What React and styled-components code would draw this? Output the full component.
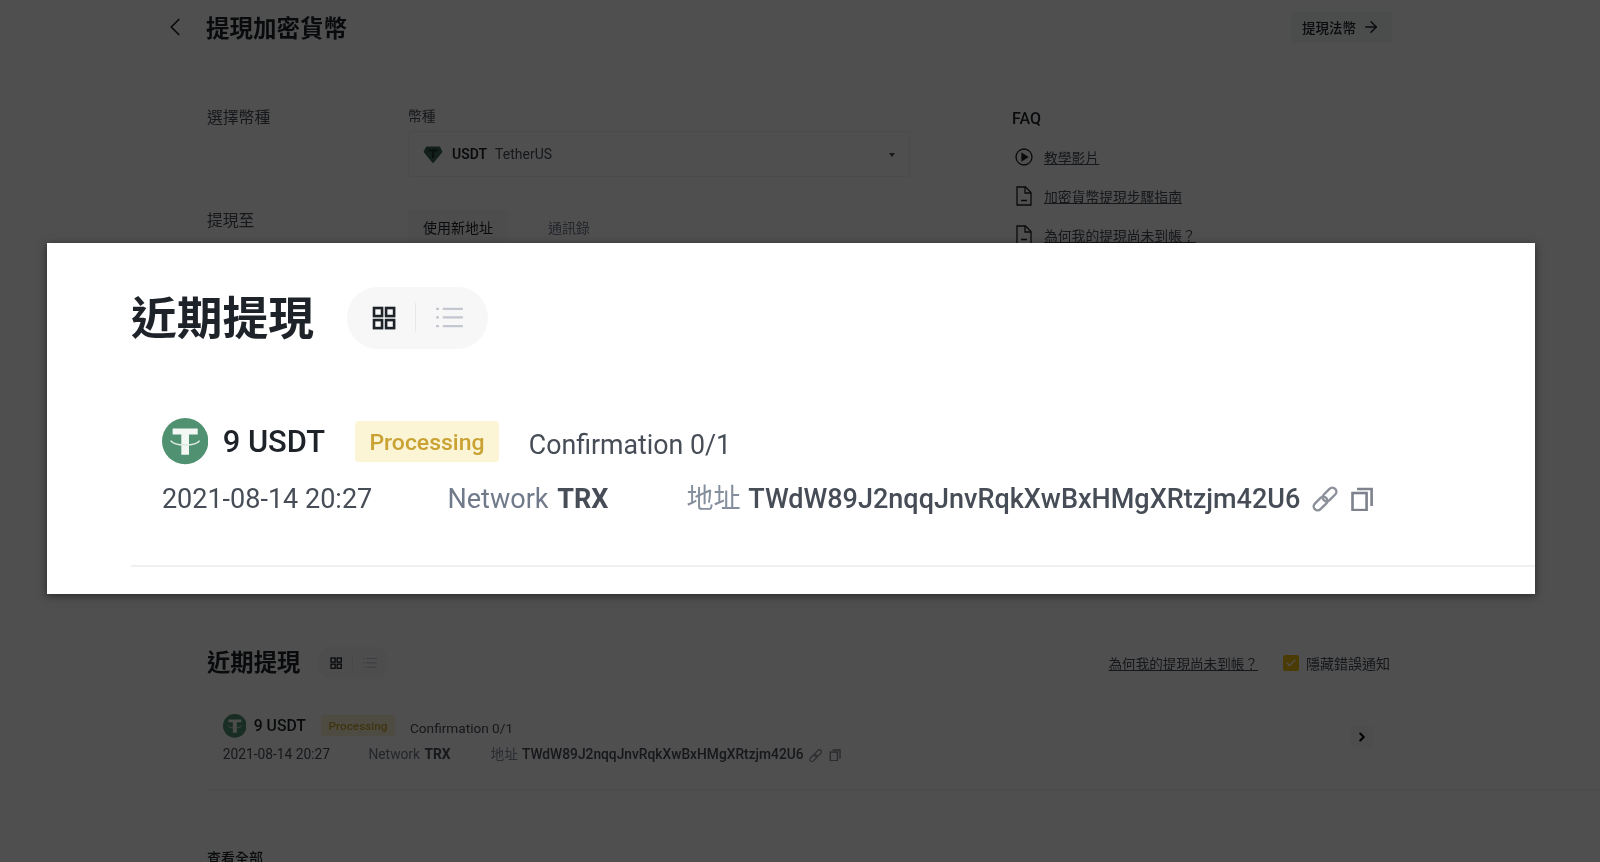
import React from "react";
import styled, { createGlobalStyle } from "styled-components";
import { ArrowRight, Check, ChevronLeft, ChevronRight } from "lucide-react";

const ADDRESS = "TWdW89J2nqqJnvRqkXwBxHMgXRtzjm42U6";
const FONT = `Roboto, "Noto Sans CJK TC", sans-serif`;

const GlobalStyle = createGlobalStyle`
  html, body {
    margin: 0;
    padding: 0;
    height: 862px;
    overflow: hidden;
    background: #fff;
    font-family: ${FONT};
    color: #1e2329;
  }
`;

// icons
const TetherCoin = ({ size }) => (
  <svg width={size} height={size} viewBox="0 0 48 48">
    <circle cx="24" cy="24" r="24" fill="#4f9170" />
    <path d="M11 11h26v6H28v21h-8V17h-9z" fill="#f4f8f5" />
    <path d="M9 23.500c2 3 9 4.500 15 4.500s13-1.500 15-4.500" fill="none" stroke="#dfeae3" strokeWidth="1.600" />
  </svg>
);

const TetherGem = () => (
  <svg width="20" height="20" viewBox="0 0 20 20">
    <path d="M4 2.500h12a1.500 1.500 0 0 1 1.300.7L19.500 8 11 18.300a1.300 1.300 0 0 1-2 0L.5 8l2.200-4.800A1.500 1.500 0 0 1 4 2.500z" fill="#3a6655" />
    <path d="M5.500 5.500h9v2h-3.400V14H8.900V7.500H5.500z" fill="#1f352b" />
  </svg>
);

const GridIcon = ({ size }) => (
  <svg width={size} height={size} viewBox="0 0 24 24" fill="none" stroke="#1e2329" strokeWidth="2.600">
    <rect x="2" y="2" width="8" height="8" />
    <rect x="14" y="2" width="8" height="8" />
    <rect x="2" y="14" width="8" height="8" />
    <rect x="14" y="14" width="8" height="8" />
  </svg>
);

const ListIcon = ({ size }) => (
  <svg width={size} height={size * 0.85} viewBox="0 0 28 24" fill="none" stroke="#c4c6d0" strokeWidth="2.400">
    <path d="M7 3h21M7 12h21M7 21h21" />
    <path d="M0 3h3M0 12h3M0 21h3" />
  </svg>
);

const ChainIcon = ({ size, color }) => (
  <svg width={size} height={size} viewBox="0 0 26 26" fill="none" stroke={color} strokeWidth="2.400">
    <rect x="0.500" y="13.500" width="16" height="8" rx="4" transform="rotate(-45 8.500 17.500)" />
    <rect x="9.500" y="4.500" width="16" height="8" rx="4" transform="rotate(-45 17.500 8.500)" />
  </svg>
);

const CopyIcon = ({ size, color }) => (
  <svg width={size} height={size} viewBox="0 0 24 24" fill="none" stroke={color} strokeWidth="2.600">
    <rect x="2.500" y="6" width="14" height="17" />
    <path d="M7 2h14.500v17" />
  </svg>
);

const PlayIcon = () => (
  <svg width="18" height="18" viewBox="0 0 18 18" fill="none" stroke="#222" strokeWidth="1.300">
    <circle cx="9" cy="9" r="8" />
    <path d="M7 5.500 12.500 9 7 12.500z" fill="#222" />
  </svg>
);

const FileIcon = () => (
  <svg width="16" height="20" viewBox="0 0 16 20" fill="none" stroke="#222" strokeWidth="1.300">
    <path d="M1 1h8.500L15 6.500V19H1z" />
    <path d="M9 1v6h6M5 14.500h6" />
  </svg>
);

// page behind the overlay
const Page = styled.div`
  width: 1600px;
  height: 862px;
  overflow: hidden;
  filter: blur(0.6px);
`;

const Header = styled.header`
  display: flex;
  align-items: center;
  height: 54px;
  padding: 0 208px 0 161px;
`;

const BackButton = styled.span`
  display: flex;
  width: 45px;
  margin-left: -1px;
  margin-right: 1px;
  color: #222;
`;

const PageTitle = styled.h1`
  flex: 1;
  margin: 0;
  font-size: 23.500px;
  font-weight: 700;
`;

const FiatButton = styled.button`
  display: flex;
  align-items: center;
  gap: 6px;
  height: 31px;
  padding: 0 12px 0 11px;
  border: 0;
  border-radius: 3px;
  background: #f3f4f6;
  font: 500 13.500px ${FONT};
  color: #1e2329;
`;

const Content = styled.main`
  display: grid;
  grid-template-columns: 805px 1fr;
  height: 593px;
  padding: 52px 0 0 207px;
  box-sizing: border-box;
`;

const Form = styled.div`
  display: flex;
  flex-direction: column;
  gap: 33px;
`;

const FormRow = styled.div`
  display: grid;
  grid-template-columns: 201px 502px;
`;

const FormLabel = styled.div`
  padding-top: ${(p) => p.$offset}px;
  font-size: 15.800px;
  line-height: 20px;
  color: #474d57;
`;

const FieldLabel = styled.div`
  margin-bottom: 5px;
  font-size: 13.800px;
  line-height: 20px;
  color: #474d57;
`;

const Select = styled.div`
  display: flex;
  align-items: center;
  height: 46px;
  padding: 0 14px;
  border: 1px solid #f1f1f1;
  border-radius: 3px;
  box-sizing: border-box;
  font-size: 14px;
`;

const SelectCode = styled.b`
  margin-left: 9px;
  font-weight: 600;
`;

const SelectName = styled.span`
  flex: 1;
  margin-left: 8px;
  color: #474d57;
`;

const Caret = styled.span`
  width: 0;
  height: 0;
  border: 3.500px solid transparent;
  border-top: 4px solid #474d57;
  margin-top: 4px;
`;

const Tabs = styled.div`
  display: flex;
  gap: 25px;
  height: 33px;
`;

const Tab = styled.div`
  padding: 2px 15px 0;
  height: 33px;
  line-height: 33px;
  font-size: 14px;
  box-sizing: content-box;
  background: ${(p) => (p.$active ? "#f8f8f8" : "transparent")};
  color: ${(p) => (p.$active ? "#1e2329" : "#707a8a")};
`;

const Faq = styled.aside`
  display: flex;
  flex-direction: column;
  gap: 19px;
  padding-top: 3px;
`;

const FaqTitle = styled.div`
  font-size: 16px;
  line-height: 20px;
  font-weight: 500;
  margin-bottom: -1px;
`;

const FaqLink = styled.a`
  display: flex;
  align-items: center;
  gap: 11px;
  height: 20px;
  margin-left: 3px;
  font-size: 13.800px;
  color: #474d57;
  text-decoration: underline;
`;

const FaqIcon = styled.span`
  display: flex;
  justify-content: center;
  width: 18px;
`;

const HeadRow = styled.div`
  display: flex;
  align-items: center;
`;

const Recent = styled.section`
  padding-left: 207px;
`;

const RecentTools = styled.div`
  display: flex;
  align-items: center;
  margin-left: auto;
  margin-right: 210px;
`;

const WhyLink = styled.a`
  font-size: 13.600px;
  color: #474d57;
  text-decoration: underline;
  margin-right: 25px;
`;

const Checkbox = styled.span`
  display: flex;
  align-items: center;
  justify-content: center;
  width: 16px;
  height: 16px;
  margin-right: 7px;
  border-radius: 2px;
  background: #f0c010;
  color: #fff;
`;

const HideLabel = styled.span`
  font-size: 14px;
  color: #474d57;
`;

const RowArrow = styled.span`
  position: absolute;
  right: 227px;
  top: 12px;
  display: flex;
  padding: 4px;
  color: #000;
  background: #f8f8f8;
  border-radius: 3px;
`;

const ViewAll = styled.div`
  margin-top: 58px;
  font-size: 14px;
  font-weight: 500;
  line-height: 20px;
`;

// dim layer + the blown up panel
const Overlay = styled.div`
  position: absolute;
  inset: 0;
  background: rgba(0, 0, 0, 0.69);
`;

const Spotlight = styled.div`
  position: absolute;
  left: 47px;
  top: 243px;
  width: 1488px;
  height: 351px;
  padding: 44px 0 0 84px;
  box-sizing: border-box;
  background: #fff;
  box-shadow: 0 2px 8px rgba(0, 0, 0, 0.5);
  filter: blur(0.35px);
`;

// shared recent block, $s is the zoom factor
const Title = styled.h2`
  margin: 0;
  padding-top: ${(p) => p.$s * 2}px;
  font-size: ${(p) => p.$s * 23.700}px;
  line-height: ${(p) => p.$s * 30}px;
  font-weight: 700;
  color: #1e2329;
`;

const ViewToggle = styled.div`
  display: flex;
  align-items: center;
  height: ${(p) => p.$s * 32}px;
  margin-left: ${(p) => p.$s * 17}px;
  padding: 0 ${(p) => p.$s * 13}px;
  border-radius: ${(p) => p.$s * 16}px;
  background: #f7f7f8;
`;

const ToggleDivider = styled.span`
  width: 1px;
  height: ${(p) => p.$s * 15}px;
  margin: 0 ${(p) => p.$s * 10}px;
  background: #e6e8ea;
`;

const Record = styled.div`
  position: relative;
  margin-top: ${(p) => p.$s * 36}px;
  padding: 0 0 ${(p) => p.$s * 24}px ${(p) => p.$s * 16}px;
  border-bottom: ${(p) => Math.round(p.$s)}px solid #eef0f2;
  color: #474d57;
`;

const TopLine = styled.div`
  display: flex;
  align-items: center;
  height: ${(p) => p.$s * 24}px;
`;

const Amount = styled.span`
  margin-left: ${(p) => p.$s * 7.500}px;
  font-size: ${(p) => p.$s * 16}px;
  font-weight: 500;
  color: #1e2329;
`;

const StatusBadge = styled.span`
  box-sizing: border-box;
  margin-left: ${(p) => p.$s * 15.500}px;
  padding: ${(p) => p.$s * 1}px ${(p) => p.$s * 7.500}px 0;
  height: ${(p) => p.$s * 21}px;
  line-height: ${(p) => p.$s * 21}px;
  border-radius: ${(p) => p.$s * 2}px;
  font-size: ${(p) => p.$s * 11.900}px;
  font-weight: 500;
  background: #fbf5d6;
  color: #c9a233;
`;

const Confirmation = styled.span`
  margin: ${(p) => p.$s * 4}px 0 0 ${(p) => p.$s * 15.500}px;
  font-size: ${(p) => p.$s * 13.850}px;
`;

const BottomLine = styled.div`
  display: flex;
  align-items: center;
  margin-top: ${(p) => p.$s * 8}px;
  font-size: ${(p) => p.$s * 14}px;
  line-height: ${(p) => p.$s * 20}px;
`;

const Network = styled.span`
  margin-left: ${(p) => p.$s * 39}px;
  color: #707a8a;
  b {
    margin-left: ${(p) => p.$s * 1}px;
    color: #474d57;
    font-weight: 700;
  }
`;

const AddressTag = styled.span`
  margin-left: ${(p) => p.$s * 40.500}px;
  color: #848e9c;
`;

const Address = styled.span`
  margin-left: ${(p) => p.$s * 0.500}px;
  font-weight: 500;
  color: #474d57;
`;

const IconBox = styled.span`
  display: flex;
  margin-left: ${(p) => p.$s * 6}px;
`;

const RecentBlock = ({ s, tools, arrow }) => (
  <>
    <HeadRow>
      <Title $s={s}>近期提現</Title>
      <ViewToggle $s={s}>
        <GridIcon size={s * 12.500} />
        <ToggleDivider $s={s} />
        <ListIcon size={s * 14} />
      </ViewToggle>
      {tools}
    </HeadRow>
    <Record $s={s}>
      <TopLine $s={s}>
        <TetherCoin size={s * 24} />
        <Amount $s={s}>9 USDT</Amount>
        <StatusBadge $s={s}>Processing</StatusBadge>
        <Confirmation $s={s}>Confirmation 0/1</Confirmation>
      </TopLine>
      <BottomLine $s={s}>
        <span>2021-08-14 20:27</span>
        <Network $s={s}>
          Network <b>TRX</b>
        </Network>
        <AddressTag $s={s}>
          地址<Address $s={s}> {ADDRESS}</Address>
        </AddressTag>
        <IconBox $s={s}>
          <ChainIcon size={s * 13.500} color="#8b9099" />
        </IconBox>
        <IconBox $s={s}>
          <CopyIcon size={s * 12.500} color="#7d828c" />
        </IconBox>
      </BottomLine>
      {arrow}
    </Record>
  </>
);

const App = () => (
  <>
    <GlobalStyle />
    <Page>
      <Header>
        <BackButton>
          <ChevronLeft size={30} strokeWidth={1.400} />
        </BackButton>
        <PageTitle>提現加密貨幣</PageTitle>
        <FiatButton>
          提現法幣 <ArrowRight size={18} />
        </FiatButton>
      </Header>
      <Content>
        <Form>
          <FormRow>
            <FormLabel $offset={2}>選擇幣種</FormLabel>
            <div>
              <FieldLabel>幣種</FieldLabel>
              <Select>
                <TetherGem />
                <SelectCode>USDT</SelectCode>
                <SelectName>TetherUS</SelectName>
                <Caret />
              </Select>
            </div>
          </FormRow>
          <FormRow>
            <FormLabel $offset={1}>提現至</FormLabel>
            <Tabs>
              <Tab $active>使用新地址</Tab>
              <Tab>通訊錄</Tab>
            </Tabs>
          </FormRow>
        </Form>
        <Faq>
          <FaqTitle>FAQ</FaqTitle>
          <FaqLink>
            <FaqIcon>
              <PlayIcon />
            </FaqIcon>
            教學影片
          </FaqLink>
          <FaqLink>
            <FaqIcon>
              <FileIcon />
            </FaqIcon>
            加密貨幣提現步驟指南
          </FaqLink>
          <FaqLink>
            <FaqIcon>
              <FileIcon />
            </FaqIcon>
            為何我的提現尚未到帳？
          </FaqLink>
        </Faq>
      </Content>
      <Recent>
        <RecentBlock
          s={0.985}
          tools={
            <RecentTools>
              <WhyLink>為何我的提現尚未到帳？</WhyLink>
              <Checkbox>
                <Check size={12} strokeWidth={2.500} />
              </Checkbox>
              <HideLabel>隱藏錯誤通知</HideLabel>
            </RecentTools>
          }
          arrow={
            <RowArrow>
              <ChevronRight size={14} strokeWidth={3.500} />
            </RowArrow>
          }
        />
        <ViewAll>查看全部</ViewAll>
      </Recent>
    </Page>
    <Overlay />
    <Spotlight>
      <RecentBlock s={1.93} />
    </Spotlight>
  </>
);

export default App;
